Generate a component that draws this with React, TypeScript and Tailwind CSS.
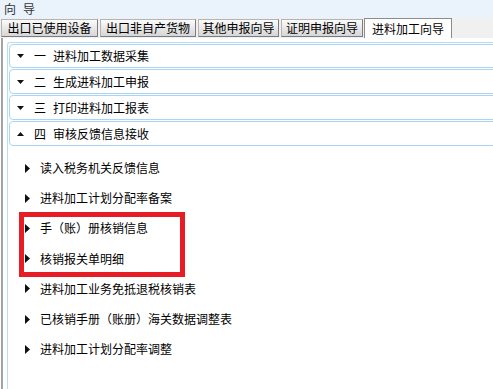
import React from 'react';

const sections = [
  { no: '一', title: '进料加工数据采集', open: false },
  { no: '二', title: '生成进料加工申报', open: false },
  { no: '三', title: '打印进料加工报表', open: false },
  { no: '四', title: '审核反馈信息接收', open: true },
];

const items = [
  '读入税务机关反馈信息',
  '进料加工计划分配率备案',
  '手（账）册核销信息',
  '核销报关单明细',
  '进料加工业务免抵退税核销表',
  '已核销手册（账册）海关数据调整表',
  '进料加工计划分配率调整',
];

const tabs = [
  { label: '出口已使用设备', w: 'w-[97px]' },
  { label: '出口非自产货物', w: 'w-[96px]' },
  { label: '其他申报向导', w: 'w-[81px]' },
  { label: '证明申报向导', w: 'w-[82px]' },
];

const Caret: React.FC<{ dir: 'down' | 'up' | 'right' }> = ({ dir }) => {
  if (dir === 'right') {
    return (
      <svg width="5" height="9" viewBox="0 0 5 9" className="shrink-0">
        <path d="M0 0 L5 4.5 L0 9 Z" fill="#111" />
      </svg>
    );
  }
  return (
    <svg width="7" height="4" viewBox="0 0 7 4" className="shrink-0">
      {dir === 'down' ? <path d="M0 0 H7 L3.5 4 Z" fill="#111" /> : <path d="M0 4 H7 L3.5 0 Z" fill="#111" />}
    </svg>
  );
};

export default function App() {
  return (
    <div
      className="relative w-[493px] h-[389px] overflow-hidden bg-white text-[12px] leading-none text-black flex flex-col"
      style={{ fontFamily: '"Noto Sans CJK SC", "Noto Sans", sans-serif' }}
    >
      {/* title */}
      <div className="h-[18px] shrink-0 bg-[#eaf2fc] pl-[4px] flex items-center text-[#333] tracking-[7px]">
        向导
      </div>

      {/* tabs */}
      <div className="h-[20px] shrink-0 bg-[#f0f0f0] flex items-end pl-px">
        {tabs.map((t, i) => (
          <div
            key={t.label}
            className={`${t.w} ${i < tabs.length - 1 ? 'mr-[2px]' : 'mr-px'} h-[18px] mb-px flex items-center justify-center border border-[#b4b4b4] border-r-[#7c7c7c] border-b-[#7c7c7c] bg-gradient-to-b from-[#fbfbfb] to-[#d6d6d6] text-black`}
          >
            {t.label}
          </div>
        ))}
        <div className="w-[88px] h-[20px] flex items-center justify-center border border-b-0 border-[#8c8c8c] bg-white">
          进料加工向导
        </div>
      </div>

      {/* panel */}
      <div className="flex-1 ml-px border-l-2 border-[#a4a4a4] pl-[4px] pt-[4px]">
        <div className="h-full border-l border-t border-[#b5def8] rounded-tl-[3px] pl-px overflow-hidden">
          <div className="w-[520px] flex flex-col">
            {sections.map((s, i) => (
              <div
                key={s.no}
                className={`${i === 0 ? 'h-[24px]' : 'h-[25px]'} mt-px flex items-center border border-[#aad6f6] rounded-[4px] pl-[7px]`}
              >
                <Caret dir={s.open ? 'up' : 'down'} />
                <span className="ml-[10px] w-[19px]">{s.no}</span>
                <span>{s.title}</span>
              </div>
            ))}
          </div>

          <div className="flex flex-col pt-[7px]">
            {items.map((it) => (
              <div key={it} className="h-[30.2px] flex items-center pl-[16px]">
                <Caret dir="right" />
                <span className="ml-[10px]">{it}</span>
              </div>
            ))}
          </div>
        </div>
      </div>

      {/* annotation */}
      <div className="absolute left-[19px] top-[212px] w-[166px] h-[65px] border-[5px] border-[#e81c24] pointer-events-none" />
    </div>
  );
}
